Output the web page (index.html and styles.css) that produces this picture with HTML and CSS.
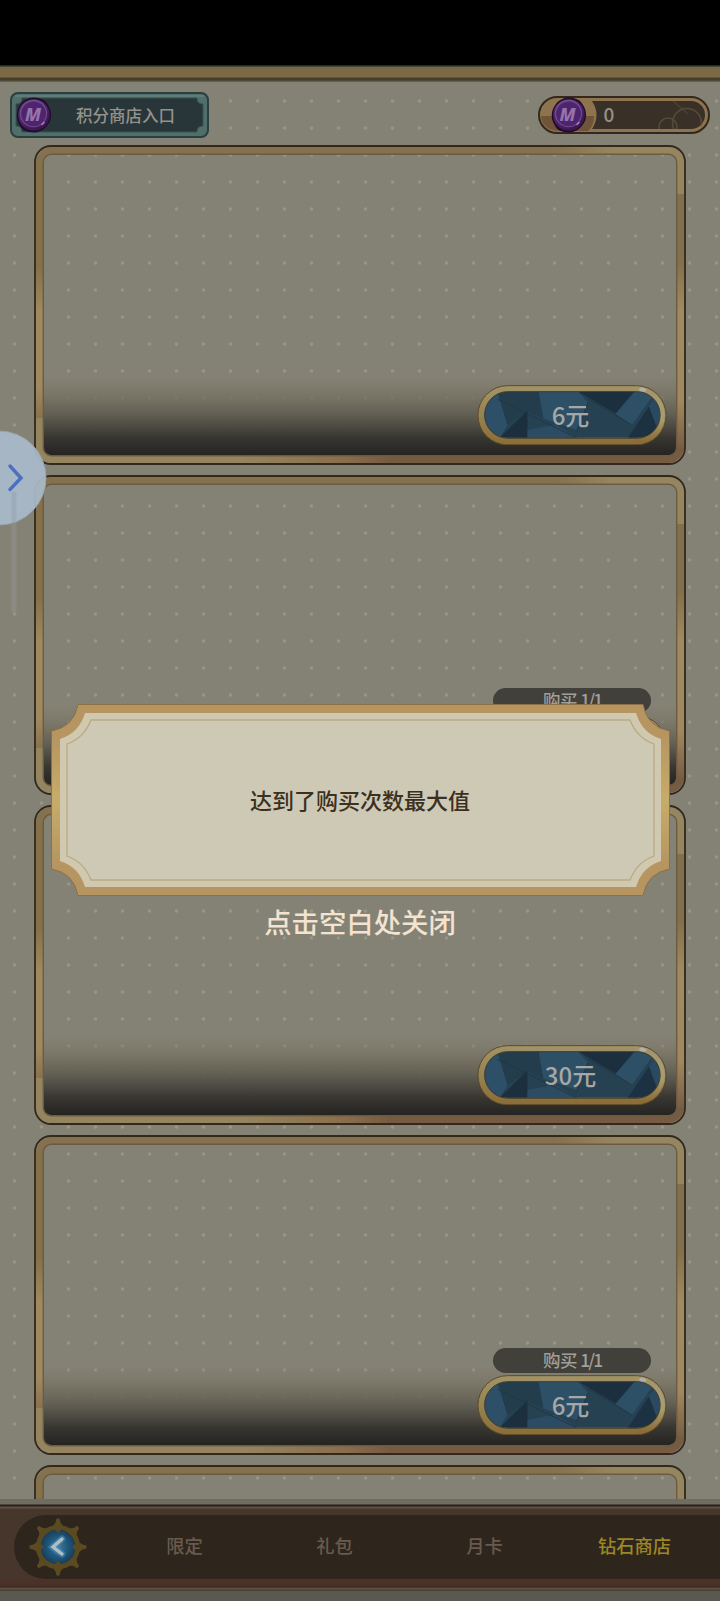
FILE: index.html
```html
<!DOCTYPE html>
<html lang="zh-CN">
<head>
<meta charset="utf-8">
<title>钻石商店</title>
<link rel="stylesheet" href="styles.css">
</head>
<body>
<svg class="defs" width="0" height="0" aria-hidden="true">
  <defs>
    <linearGradient id="side-left" gradientUnits="userSpaceOnUse" x1="0" y1="0" x2="0" y2="320">
      <stop offset=".38" stop-color="#847049"/><stop offset=".52" stop-color="#9f8a5f"/>
      <stop offset=".76" stop-color="#9f8a5f"/><stop offset=".86" stop-color="#867050"/>
    </linearGradient>
    <linearGradient id="side-right" gradientUnits="userSpaceOnUse" x1="0" y1="0" x2="0" y2="320">
      <stop offset=".36" stop-color="#826f4b"/><stop offset=".52" stop-color="#a08b60"/>
      <stop offset=".8" stop-color="#9f895f"/><stop offset=".94" stop-color="#795f46"/>
    </linearGradient>
    <linearGradient id="edge-top" gradientUnits="userSpaceOnUse" x1="0" y1="0" x2="652" y2="0">
      <stop offset=".8" stop-color="#84714d"/><stop offset=".89" stop-color="#96865f"/>
    </linearGradient>
    <linearGradient id="edge-bottom" gradientUnits="userSpaceOnUse" x1="0" y1="0" x2="652" y2="20">
      <stop offset=".33" stop-color="#94855f"/><stop offset=".49" stop-color="#8a6e4c"/><stop offset=".56" stop-color="#765b43"/>
    </linearGradient>
    <linearGradient id="shade" x1="0" y1="0" x2="0" y2="1">
      <stop offset="0" stop-color="#7d7868" stop-opacity="0"/><stop offset=".25" stop-color="#747060" stop-opacity=".7"/>
      <stop offset=".53" stop-color="#5a574d" stop-opacity=".95"/><stop offset=".78" stop-color="#383630"/><stop offset="1" stop-color="#242421"/>
    </linearGradient>
    <linearGradient id="rim" x1="0" y1="0" x2="0" y2="1">
      <stop offset="0" stop-color="#a29368"/><stop offset=".5" stop-color="#968352"/><stop offset="1" stop-color="#8a6c37"/>
    </linearGradient>
    <linearGradient id="rim-light" gradientUnits="userSpaceOnUse" x1="0" y1="56" x2="0" y2="214">
      <stop offset="0" stop-color="#a29368"/><stop offset=".3" stop-color="#a69c78"/><stop offset=".6" stop-color="#a69c72"/><stop offset="1" stop-color="#8a6c37"/>
    </linearGradient>
    <radialGradient id="coin-face" cx=".4" cy=".35" r=".7">
      <stop offset="0" stop-color="#664080"/><stop offset=".65" stop-color="#4b2369"/><stop offset="1" stop-color="#351347"/>
    </radialGradient>
    <radialGradient id="orb" cx=".5" cy=".5" r=".5">
      <stop offset="0" stop-color="#467b9d"/><stop offset=".45" stop-color="#205c83"/><stop offset="1" stop-color="#173549"/>
    </radialGradient>
    <linearGradient id="modal-gold" x1="0" y1="0" x2="0" y2="1">
      <stop offset=".16" stop-color="#b69560"/><stop offset=".5" stop-color="#c6ac69"/><stop offset=".84" stop-color="#b69560"/>
    </linearGradient>
    <clipPath id="gem-clip"><rect x="74" y="66" width="526" height="138" rx="69"/></clipPath>
    <clipPath id="slot-clip"><rect x="54" y="5" width="114" height="28" rx="14"/></clipPath>
  </defs>
  <symbol id="frame" viewBox="0 0 652 320">
    <rect x="10" y="230" width="632" height="80" rx="6" fill="url(#shade)"/>
    <g fill="none" stroke-width="7">
      <path d="M5.5 274V16" stroke="url(#side-left)"/>
      <path d="M646.500 48V306" stroke="url(#side-right)"/>
      <path d="M5.500 18A13 13 0 0 1 18.500 5.500H633.500A13 13 0 0 1 646.500 18.500V49" stroke="url(#edge-top)"/>
      <path d="M5.500 273V302A12.500 12.500 0 0 0 18 314.500H634A12.500 12.500 0 0 0 646.500 302" stroke="url(#edge-bottom)"/>
    </g>
    <rect x="9.300" y="9.300" width="633.400" height="301.400" rx="8" fill="none" stroke="#6d5a42" stroke-width="1.400"/>
    <rect x="1" y="1" width="650" height="318" rx="16" fill="none" stroke="#33281a" stroke-width="1.800"/>
  </symbol>
  <symbol id="gem" viewBox="51 45 570 182">
    <rect x="53" y="47" width="566" height="178" rx="89" fill="url(#rim)" stroke="#5c4a26" stroke-width="3"/>
    <path d="M530 57A79 79 0 0 1 530 215" fill="none" stroke="url(#rim-light)" stroke-width="13"/>
    <g clip-path="url(#gem-clip)">
      <path fill="#264252" d="M74 66H600V204H74Z"/>
      <path fill="#2d5068" d="M74 66H112L142 165 118 204H74Z"/>
      <path fill="#243d4c" d="M112 66H236L250 145 202 124 142 165Z"/>
      <path fill="#1b2f3f" d="M118 204L202 122V204Z"/>
      <path fill="#2d5067" d="M236 66H355L384 98 350 180 250 146Z"/>
      <path fill="#2b4c62" d="M202 180L285 164 352 204H202Z"/>
      <path fill="#1b2f3f" d="M357 66H522L467 131Z"/>
      <path fill="#2d5067" d="M524 66H588L516 165 467 132Z"/>
      <path fill="#1c3141" d="M504 204L568 110 590 170 570 204Z"/>
      <path fill="#294a60" d="M568 110L588 75H600V160L588 164Z"/>
      <path fill="none" stroke="#213747" stroke-width="3" d="M112 88L350 204M384 86L516 165M350 185L384 98"/>
    </g>
    <rect x="73" y="65" width="528" height="140" rx="70" fill="none" stroke="#3b3a2c" stroke-width="3"/>
    <ellipse cx="549" cy="59" rx="11" ry="6" fill="#aeb0ac" transform="rotate(12 549 59)"/>
  </symbol>
  <symbol id="coin" viewBox="0 0 36 36">
    <path d="M18 .500C23 1 29 2 32 8 35 12 36 19 34 24 31 30 26 35 19 35.500 11 35 6 34 3 27 0 22 0 15 3 10 6 4 11 1 18 .500Z" fill="#210b2b"/>
    <circle cx="18" cy="18" r="15.800" fill="url(#coin-face)"/>
    <circle cx="17.500" cy="16.500" r="13" fill="none" stroke="#7a5590" stroke-width="1.400" opacity=".8"/>
    <circle cx="17.500" cy="17.200" r="12" fill="#4e2470"/>
    <path d="M26 27.500l2-2" stroke="#a68bb5" stroke-width="1.400" stroke-linecap="round"/>
  </symbol>
</svg>

<div class="screen">
  <div class="status"></div>
  <div class="rail"></div>
  <main class="shop">
    <header class="tools">
      <a class="entry">
        <svg class="entry-frame" viewBox="0 0 199 46"><rect x="1" y="1" width="197" height="44" rx="7" fill="#506e6a" stroke="#2a3f3f" stroke-width="2"/><path d="M12 6H187Q187 12 193 12V34Q187 34 187 40H12Q12 34 6 34V12Q12 12 12 6Z" fill="#283539" stroke="#3b5553" stroke-width="1"/><path d="M5 4H194" stroke="#64827c" stroke-width="1.500"/></svg>
        <span class="coin"><svg><use href="#coin"/></svg><b>M</b></span>
        <span class="label">积分商店入口</span>
      </a>
      <div class="wallet">
        <svg class="wallet-frame" viewBox="0 0 172 38"><rect x="1" y="1" width="170" height="36" rx="18" fill="#8d744f" stroke="#33281c" stroke-width="2"/><path d="M3 20H56Q56 30 50 35H19Q4 33 3 20Z" fill="#705437"/><path d="M54 5H153A14 14 0 0 1 153 33H54Q63 19 54 5Z" fill="#393128"/><g clip-path="url(#slot-clip)" fill="none" stroke="#574b38" stroke-width="1.500"><circle cx="149" cy="27" r="14.500"/><circle cx="130" cy="31" r="9"/><path d="M134 4L150 18" opacity=".6"/></g></svg>
        <span class="coin"><svg><use href="#coin"/></svg><b>M</b></span>
        <span class="amount">0</span>
      </div>
    </header>
    <section class="cards">
      <article class="card"><svg class="frame"><use href="#frame"/></svg><button class="price"><svg><use href="#gem"/></svg><span>6元</span></button></article>
      <article class="card"><svg class="frame"><use href="#frame"/></svg><div class="limit">购买 <i>1/1</i></div><button class="price"><svg><use href="#gem"/></svg></button></article>
      <article class="card"><svg class="frame"><use href="#frame"/></svg><button class="price"><svg><use href="#gem"/></svg><span>30元</span></button></article>
      <article class="card"><svg class="frame"><use href="#frame"/></svg><div class="limit">购买 <i>1/1</i></div><button class="price"><svg><use href="#gem"/></svg><span>6元</span></button></article>
      <article class="card"><svg class="frame"><use href="#frame"/></svg></article>
    </section>
  </main>
  <nav class="nav">
    <div class="tray">
      <svg class="back" viewBox="-30 -30 60 60">
        <g fill="#5a4b22"><path id="sp" d="M-5-21L-2.500-24.500-1.500-28.500H1.500L2.500-24.500 5-21Z"/><use href="#sp" transform="rotate(45)"/><use href="#sp" transform="rotate(90)"/><use href="#sp" transform="rotate(135)"/><use href="#sp" transform="rotate(180)"/><use href="#sp" transform="rotate(225)"/><use href="#sp" transform="rotate(270)"/><use href="#sp" transform="rotate(315)"/></g>
        <circle r="19.800" fill="url(#orb)" stroke="#594a22" stroke-width="4.600"/>
        <g fill="#594a22"><path d="M-4-18H4L0-14ZM-4 18H4L0 14ZM-18-4V4L-14 0ZM18-4V4L14 0Z"/></g>
        <path d="M4-8L-5 0 4 7" fill="none" stroke="#4d91b5" stroke-width="7" opacity=".5" stroke-linecap="round"/>
        <path d="M4-8L-5 0 4 7" fill="none" stroke="#b0bec4" stroke-width="3.400" stroke-linecap="round"/>
      </svg>
      <div class="tabs"><a>限定</a><a>礼包</a><a>月卡</a><a class="active">钻石商店</a></div>
    </div>
  </nav>
  <div class="floor"></div>

  <div class="overlay">
    <div class="dialog">
      <svg class="dialog-frame" viewBox="0 0 619 192">
        <path d="M27 .500H592Q596 23 618.500 27V165Q596 169 592 191.500H27Q23 169 .500 165V27Q23 23 27 .500Z" fill="url(#modal-gold)" stroke="#8d7046" stroke-width="1"/>
        <path d="M34 9H585Q591 29 610 35V157Q591 163 585 183H34Q28 163 9 157V35Q28 29 34 9Z" fill="#d0c9af"/>
        <path d="M40 16H579Q586 34 603 40V152Q586 158 579 176H40Q33 158 16 152V40Q33 34 40 16Z" fill="#cec9b5" stroke="#b8aa86" stroke-width="1.300"/>
      </svg>
      <p>达到了购买次数最大值</p>
    </div>
    <p class="hint">点击空白处关闭</p>
  </div>

  <div class="drawer">
    <svg viewBox="0 0 48 190"><path d="M14 60V180" stroke="#8c8b83" stroke-width="5" stroke-linecap="round"/><circle cx="-1" cy="48" r="47" fill="#a9b9c9" fill-opacity=".94" stroke="#98a4ac" stroke-width="1"/><path d="M14 62V92" stroke="#9eabb8" stroke-width="5"/><path d="M10 36L21 48 10 59.500" fill="none" stroke="#4c70bd" stroke-width="3.400" stroke-linecap="round"/></svg>
  </div>
</div>
</body>
</html>
```
FILE: styles.css
```css
* { box-sizing: border-box; }
body {
  margin: 0;
  font-family: "Noto Sans CJK SC", "Noto Sans", sans-serif;
  font-weight: 500;
}
p { margin: 0; }
.defs { position: absolute; }
.screen {
  position: relative;
  width: 720px;
  height: 1601px;
  overflow: hidden;
  display: flex;
  flex-direction: column;
  background: #848275;
}
.status { height: 65px; background: #000; flex: none; }
.rail {
  height: 17px;
  flex: none;
  background: linear-gradient(#2a2419 0 1px, #6d6a50 2px 4px, #7d6a45 5px 12px, #45402c 13px 15px, #6c6959 17px);
}
.shop {
  height: 1417px;
  flex: none;
  overflow: hidden;
  display: flex;
  flex-direction: column;
  background-image: radial-gradient(circle at 14.500px 14px, #98968a 0 1px, rgba(152, 150, 138, 0) 2.200px);
  background-size: 27px 27px;
  background-position: 0 5px;
}
.tools {
  flex: none;
  display: flex;
  justify-content: space-between;
  height: 63px;
  padding: 10px 10.500px 0 10px;
}
.entry, .wallet {
  position: relative;
  display: flex;
  align-items: center;
}
.entry { width: 199px; height: 46px; padding-left: 6px; gap: 24px; }
.wallet { width: 172px; height: 38px; margin-top: 4px; padding-left: 13px; gap: 17px; }
.entry-frame, .wallet-frame, .frame, .dialog-frame {
  position: absolute;
  inset: 0;
  width: 100%;
  height: 100%;
}
.coin {
  position: relative;
  display: grid;
  place-items: center;
  width: 36px;
  height: 36px;
  flex: none;
}
.coin svg, .coin b { grid-area: 1 / 1; }
.coin svg { width: 36px; height: 36px; }
.coin b {
  z-index: 1;
  margin: 0 2px 3px 0;
  font: italic 800 18px/20px "Noto Sans", sans-serif;
  color: #9673a8;
}
.label {
  position: relative;
  font-size: 16.500px;
  line-height: 24px;
  color: #96928a;
  white-space: nowrap;
}
.amount { position: relative; margin-bottom: 2px; font-size: 19px; line-height: 24px; color: #999284; }
.cards {
  flex: none;
  display: flex;
  flex-direction: column;
  gap: 10px;
  padding: 0 34px;
}
.card {
  position: relative;
  height: 320px;
  flex: none;
  display: flex;
  flex-direction: column;
  align-items: flex-end;
  justify-content: flex-end;
  padding: 0 19px 20px 0;
}
.limit {
  position: relative;
  width: 158px;
  height: 25px;
  margin: 0 16px 2px 0;
  border-radius: 13px;
  background: #41403a;
  color: #a19f99;
  font-size: 17.500px;
  letter-spacing: -.5px;
  line-height: 24px;
  text-align: center;
}
.limit i { font-style: normal; letter-spacing: -2px; }
.price {
  position: relative;
  width: 190px;
  height: 60.500px;
  padding: 0;
  border: 0;
  background: none;
  display: grid;
  place-items: center;
  font: 500 24px/30px "Noto Sans CJK SC", sans-serif;
  color: #a7a7a5;
}
.price svg { width: 190px; height: 60.500px; grid-area: 1 / 1; }
.price span { grid-area: 1 / 1; position: relative; margin: 0 3px 0 0; }
.nav {
  height: 92px;
  flex: none;
  padding: 16px 0 0 14px;
  background: linear-gradient(#6f6d61 0 5px, #29221b 6px 7px, #625044 8px 9px, #46362b 10px, #46362b 78px, #4b3229 82px 87px, #2e251d 88px, #5c4f42 89px 90px, #403a31 92px);
}
.tray {
  display: flex;
  height: 64px;
  padding-left: 14px;
  align-items: center;
  border-radius: 32px 0 0 32px;
  background: #2e261d;
}
.back { width: 60px; height: 60px; flex: none; }
.tabs { display: grid; grid-template-columns: repeat(4, 150px); margin: 0 0 5px 21.500px; flex: none; }
.tabs a { text-align: center; font-size: 18.300px; line-height: 28px; color: #6a5a4d; }
.tabs .active { color: #9c8724; }
.floor { flex: 1; background: #5a5951; }
.overlay {
  position: absolute;
  inset: 704px 0 auto;
  display: flex;
  flex-direction: column;
  align-items: center;
}
.dialog {
  position: relative;
  width: 619px;
  height: 192px;
  display: grid;
  place-items: center;
}
.dialog p {
  position: relative;
  margin-bottom: 3px;
  font-size: 22px;
  line-height: 32px;
  color: #3b3021;
}
.hint {
  margin-top: 5px;
  font-size: 27.400px;
  line-height: 40px;
  color: #f3e3d0;
}
.drawer { position: absolute; left: 0; top: 430px; width: 48px; height: 190px; }
.drawer svg { display: block; width: 48px; height: 190px; overflow: hidden; }
```
